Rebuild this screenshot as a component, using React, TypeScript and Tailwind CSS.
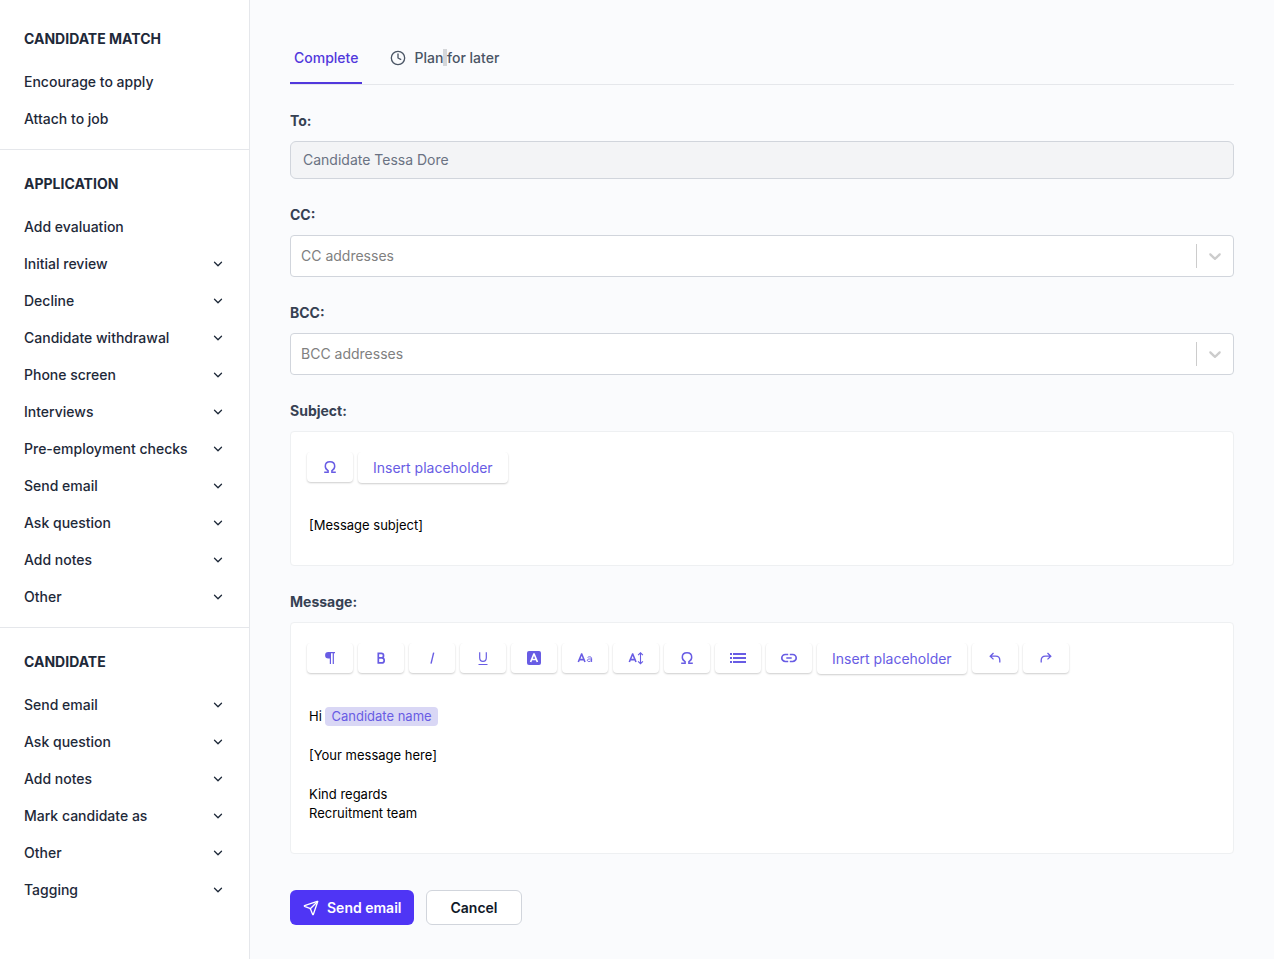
// src/App.tsx

import type { ReactNode } from 'react';
import { ChevronDown, Clock, Send } from 'lucide-react';

type MenuItem = { label: string; expandable?: boolean };
type MenuSection = { title: string; items: MenuItem[] };

const sections: MenuSection[] = [
  {
    title: 'CANDIDATE MATCH',
    items: [{ label: 'Encourage to apply' }, { label: 'Attach to job' }],
  },
  {
    title: 'APPLICATION',
    items: [
      { label: 'Add evaluation' },
      { label: 'Initial review', expandable: true },
      { label: 'Decline', expandable: true },
      { label: 'Candidate withdrawal', expandable: true },
      { label: 'Phone screen', expandable: true },
      { label: 'Interviews', expandable: true },
      { label: 'Pre-employment checks', expandable: true },
      { label: 'Send email', expandable: true },
      { label: 'Ask question', expandable: true },
      { label: 'Add notes', expandable: true },
      { label: 'Other', expandable: true },
    ],
  },
  {
    title: 'CANDIDATE',
    items: [
      { label: 'Send email', expandable: true },
      { label: 'Ask question', expandable: true },
      { label: 'Add notes', expandable: true },
      { label: 'Mark candidate as', expandable: true },
      { label: 'Other', expandable: true },
      { label: 'Tagging', expandable: true },
    ],
  },
];

function Icon({ children }: { children: ReactNode }) {
  return (
    <svg
      viewBox="0 0 18 18"
      className="w-[18px] h-[18px]"
      fill="none"
      stroke="currentColor"
      strokeWidth="1.4"
      aria-hidden="true"
    >
      {children}
    </svg>
  );
}

const icons = {
  paragraph: (
    <Icon>
      <path d="M14 3.6H7.2M9.4 3.6V15M12.3 3.6V15" strokeWidth="1.2" />
      <path d="M9.4 3H7.3a3.2 3.2 0 0 0 0 6.4h2.1z" fill="currentColor" stroke="none" />
    </Icon>
  ),
  bold: (
    <Icon>
      <path d="M6.3 4.4h3a2.2 2.2 0 0 1 0 4.5h-3zM6.3 8.9h3.4a2.5 2.5 0 0 1 0 5H6.3z" strokeWidth="1.7" />
    </Icon>
  ),
  italic: (
    <Icon>
      <path d="M10.7 3.6 8 14.6" strokeWidth="1.4" />
    </Icon>
  ),
  underline: (
    <Icon>
      <path d="M5.7 3.2v5.6c0 2.3 1.3 3.6 3.3 3.6s3.3-1.3 3.3-3.6V3.2" strokeWidth="1.2" />
      <path d="M4.5 15.5h9" strokeWidth="1" />
    </Icon>
  ),
  background: (
    <Icon>
      <rect x="2" y="2" width="14" height="14" rx="2" fill="currentColor" stroke="none" />
      <path d="M5.6 13 8.9 5h.2l3.3 8M6.8 10.5h4.4" stroke="white" strokeWidth="1.7" />
    </Icon>
  ),
  fontFamily: (
    <Icon>
      <path d="M2.3 13 5.6 5h.1L9 13M3.4 10.6h4.5" strokeWidth="1.6" />
      <path d="M11.6 8.5c.6-.5 1.2-.7 2-.7 1.4 0 2 .7 2 1.9V13M15.6 10h-2c-1.3 0-2.2.4-2.2 1.3 0 .8.6 1.2 1.5 1.2 1.4 0 2.7-.8 2.7-2" strokeWidth="1" />
    </Icon>
  ),
  fontSize: (
    <Icon>
      <path d="M2.3 13 5.6 5h.1L9 13M3.4 10.6h4.5" strokeWidth="1.6" />
      <path d="M13.5 4v10.5M11.1 6.2l2.4-2.4 2.4 2.4M11.1 12.3l2.4 2.4 2.4-2.4" strokeWidth="1.1" />
    </Icon>
  ),
  omega: (
    <Icon>
      <path d="M3.2 14.3h3.9v-1.7C5.3 11.7 4.3 10.2 4.3 8.3c0-2.7 1.9-4.5 4.7-4.5s4.7 1.8 4.7 4.5c0 1.9-1 3.4-2.8 4.3v1.7h3.9" strokeWidth="1.5" />
    </Icon>
  ),
  list: (
    <svg viewBox="0 0 18 18" className="w-[18px] h-[18px]" fill="currentColor" aria-hidden="true">
      <path d="M1 4h2v2H1zM1 8h2v2H1zM1 12h2v2H1zM4 4h13v2H4zM4 8h13v2H4zM4 12h13v2H4z" />
    </svg>
  ),
  link: (
    <Icon>
      <path d="M8.2 5.5H5.3a3.5 3.5 0 0 0 0 7h2.9M9.8 5.500h2.900a3.500 3.500 0 0 1 0 7H9.800M6.300 9h5.400" strokeWidth="1.7" />
    </Icon>
  ),
  undo: (
    <Icon>
      <path d="M7.5 4 4.2 7.2l3.3 3.2M4.5 7.2h5.2c2.6 0 4.1 1.5 4.1 4.1v2.2" strokeWidth="1.3" />
    </Icon>
  ),
  redo: (
    <Icon>
      <path d="m10.5 4 3.3 3.2-3.3 3.2M13.5 7.2H8.3c-2.6 0-4.1 1.5-4.1 4.1v2.2" strokeWidth="1.3" />
    </Icon>
  ),
};

const formatTools = [
  { label: 'Paragraph', icon: icons.paragraph },
  { label: 'Bold', icon: icons.bold },
  { label: 'Italic', icon: icons.italic },
  { label: 'Underline', icon: icons.underline },
  { label: 'Background colour', icon: icons.background },
  { label: 'Font family', icon: icons.fontFamily },
  { label: 'Font size', icon: icons.fontSize },
  { label: 'Special characters', icon: icons.omega },
  { label: 'Bulleted list', icon: icons.list },
  { label: 'Link', icon: icons.link },
];

const historyTools = [
  { label: 'Undo', icon: icons.undo },
  { label: 'Redo', icon: icons.redo },
];

function ToolButton({ label, children }: { label: string; children: ReactNode }) {
  return (
    <button
      type="button"
      aria-label={label}
      className="w-[46px] h-[30px] flex items-center justify-center rounded-sm bg-white text-[#685ce4] shadow-[0_1px_2px_rgba(0,0,0,0.2)]"
    >
      {children}
    </button>
  );
}

function PlaceholderButton() {
  return (
    <button
      type="button"
      className="h-[31px] px-[15px] rounded-sm bg-white text-sm text-[#685ce4] shadow-[0_1px_2px_rgba(0,0,0,0.2)]"
    >
      Insert placeholder
    </button>
  );
}

function Toolbar({ children }: { children: ReactNode }) {
  return (
    <div className="flex flex-wrap items-start gap-[5px] overflow-hidden px-1 pb-1">{children}</div>
  );
}

function Sidebar() {
  return (
    <aside className="w-[250px] shrink-0 bg-white border-r border-gray-200 pt-[5px]">
      {sections.map((section) => (
        <section
          key={section.title}
          className="pt-[23px] pb-3 px-6 border-b border-gray-200 last:border-b-0"
        >
          <h2 className="mb-[13px] text-sm leading-[22px] font-bold text-gray-800">
            {section.title}
          </h2>
          <ul>
            {section.items.map((item) => (
              <li key={item.label}>
                <button
                  type="button"
                  className="w-full h-[37px] flex items-center justify-between text-sm font-medium text-gray-800"
                >
                  {item.label}
                  {item.expandable && <ChevronDown className="w-[14px] h-[14px]" strokeWidth={2.2} />}
                </button>
              </li>
            ))}
          </ul>
        </section>
      ))}
    </aside>
  );
}

function FieldLabel({ htmlFor, children }: { htmlFor: string; children: ReactNode }) {
  return (
    <label htmlFor={htmlFor} className="block mb-[10px] text-sm leading-5 font-bold text-gray-700">
      {children}
    </label>
  );
}

function AddressSelect({ id, label, placeholder }: { id: string; label: string; placeholder: string }) {
  return (
    <div>
      <FieldLabel htmlFor={id}>{label}</FieldLabel>
      <div className="relative">
        <select
          id={id}
          className="block w-full h-[42px] appearance-none rounded-sm border border-gray-300 bg-white px-[10px] text-sm text-[#808080]"
        >
          <option>{placeholder}</option>
        </select>
        <div className="absolute inset-y-2 right-0 w-[38px] my-px pr-[2px] border-l border-[#cccccc] flex items-center justify-center text-[#cccccc] pointer-events-none">
          <svg viewBox="0 0 20 20" className="w-5 h-5" fill="currentColor" aria-hidden="true">
            <path d="M4.516 7.548c0.436-0.446 1.043-0.481 1.576 0l3.908 3.747 3.908-3.747c0.533-0.481 1.141-0.446 1.574 0 0.436 0.445 0.408 1.197 0 1.615-0.406 0.418-4.695 4.502-4.695 4.502-0.217 0.223-0.502 0.335-0.787 0.335s-0.570-0.112-0.789-0.335c0 0-4.287-4.084-4.695-4.502s-0.436-1.170 0-1.615z" />
          </svg>
        </div>
      </div>
    </div>
  );
}

export default function App() {
  return (
    <div className="min-h-screen flex bg-[#fafbfd] font-['Inter',sans-serif]">
      <Sidebar />

      <main className="flex-1 min-w-0 px-10 pt-12 pb-[34px]">
        {/* Tabs */}
        <nav className="flex gap-6 border-b border-gray-200">
          <a
            href="#complete"
            className="px-1 pb-[14px] border-b-2 border-[#5138dc] text-sm leading-5 font-medium text-[#5138dc]"
          >
            Complete
          </a>
          <a
            href="#plan"
            className="flex items-center gap-2 px-1 pb-[14px] border-b-2 border-transparent text-sm leading-5 font-medium text-gray-600"
          >
            <Clock className="w-4 h-4" />
            <span>
              Plan<span className="bg-[#d5d7da]"> </span>for later
            </span>
          </a>
        </nav>

        <form className="mt-[26px] flex flex-col gap-[26px]">
          <div>
            <FieldLabel htmlFor="to">To:</FieldLabel>
            <input
              id="to"
              type="text"
              disabled
              value="Candidate Tessa Dore"
              className="block w-full h-[38px] px-3 pb-[2px] rounded-md border border-gray-300 bg-gray-100 text-sm text-gray-500"
            />
          </div>

          <AddressSelect id="cc" label="CC:" placeholder="CC addresses" />
          <AddressSelect id="bcc" label="BCC:" placeholder="BCC addresses" />

          {/* Subject */}
          <div>
            <FieldLabel htmlFor="subject">Subject:</FieldLabel>
            <div className="rounded-sm border border-[#eef0f2] bg-white px-3 pt-5 pb-[30px]">
              <Toolbar>
                <ToolButton label="Special characters">{icons.omega}</ToolButton>
                <PlaceholderButton />
              </Toolbar>
              <input
                id="subject"
                type="text"
                defaultValue="[Message subject]"
                className="block w-full mt-[29px] px-[6px] text-[13px] leading-[19px] text-black outline-none"
              />
            </div>
          </div>

          {/* Message */}
          <div>
            <FieldLabel htmlFor="message">Message:</FieldLabel>
            <div className="rounded-sm border border-[#eef0f2] bg-white px-3 pt-5 pb-[30px]">
              <Toolbar>
                {formatTools.map((tool) => (
                  <ToolButton key={tool.label} label={tool.label}>
                    {tool.icon}
                  </ToolButton>
                ))}
                <PlaceholderButton />
                {historyTools.map((tool) => (
                  <ToolButton key={tool.label} label={tool.label}>
                    {tool.icon}
                  </ToolButton>
                ))}
              </Toolbar>
              <div
                id="message"
                role="textbox"
                aria-multiline="true"
                aria-label="Message"
                contentEditable
                suppressContentEditableWarning
                className="mt-[29px] px-[6px] flex flex-col gap-5 text-[13px] leading-[19px] text-black outline-none"
              >
                <p>
                  Hi{' '}
                  <span className="inline-block px-[6px] rounded-sm bg-[#d9d7f5] text-[#685ce4]">
                    Candidate name
                  </span>
                </p>
                <p>[Your message here]</p>
                <p>
                  Kind regards
                  <br />
                  Recruitment team
                </p>
              </div>
            </div>
          </div>

          <div className="mt-[10px] flex gap-3">
            <button
              type="submit"
              className="h-[35px] px-[13px] flex items-center gap-2 rounded-md bg-[#4f35f5] text-sm font-semibold text-white"
            >
              <Send className="w-4 h-4" />
              Send email
            </button>
            <button
              type="button"
              className="h-[35px] px-[23px] rounded-md border border-gray-300 bg-white text-sm font-semibold text-gray-900"
            >
              Cancel
            </button>
          </div>
        </form>
      </main>
    </div>
  );
}
